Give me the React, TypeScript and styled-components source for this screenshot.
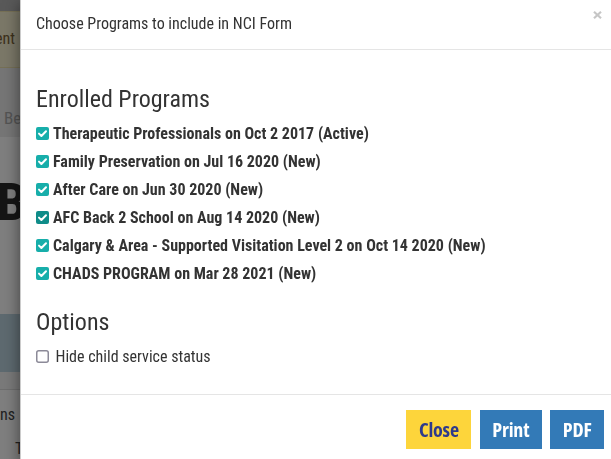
import React from "react";
import styled, { createGlobalStyle } from "styled-components";

const Global = createGlobalStyle`
  html, body { margin: 0; padding: 0; }
  body {
    width: 611px;
    height: 459px;
    overflow: hidden;
    background: #fff;
    font-family: "Roboto Condensed", Roboto, "Liberation Sans", sans-serif;
    color: #333;
  }
`;

/* ---------- underlying page (dimmed by the backdrop) ---------- */
const Page = styled.div`
  display: flex;
  flex-direction: column;
  width: 611px;
  height: 459px;
`;

const NavBar = styled.div`
  height: 11px;
  background: #b3b3b3;
`;

const Alert = styled.div`
  height: 55px;
  background: #f6f0d0;
  border-top: 1px solid #ece0ac;
  border-bottom: 1px solid #ece0ac;
  display: flex;
  align-items: center;
  color: #7a6238;
  font-size: 16px;
  line-height: 20px;
`;

const EdgeText = styled.div<{ $end: number }>`
  width: ${(p) => p.$end}px;
  display: flex;
  justify-content: flex-end;
  white-space: nowrap;
`;

const Tabs = styled.div`
  height: 69px;
  background: #ececec;
  box-sizing: border-box;
  padding: 40px 0 0 4px;
  font-size: 17px;
  line-height: 20px;
  color: #a8a8a8;
  white-space: nowrap;
`;

const Hero = styled.div`
  height: 178px;
  background: #fff;
  box-sizing: border-box;
  padding-top: 36px;
`;

const HeroTitle = styled.h1`
  margin: 0 0 0 -3px;
  font-size: 52px;
  font-weight: 700;
  line-height: 60px;
  color: #2a2a2a;
  white-space: nowrap;
`;

const TableHead = styled.div`
  height: 58px;
  background: #bdd4e0;
`;

const Band = styled.div`
  height: 17px;
  background: #f4f4f4;
  border-bottom: 1px solid #dcdcdc;
`;

const Rows = styled.div`
  flex: 1;
  background: #fff;
  display: flex;
  flex-direction: column;
  padding-top: 15px;
  gap: 14px;
  font-size: 16px;
  line-height: 20px;
  color: #444;
`;

const Trail = styled.div`
  padding-left: 15px;
  white-space: nowrap;
`;

/* ---------- modal ---------- */
const Backdrop = styled.div`
  position: fixed;
  inset: 0;
  background: rgba(0, 0, 0, 0.5);
`;

const Modal = styled.div`
  position: absolute;
  top: -2px;
  left: 20px;
  width: 600px;
  box-sizing: border-box;
  background: #fff;
  border: 1px solid rgba(0, 0, 0, 0.2);
  box-shadow: 0 5px 15px rgba(0, 0, 0, 0.5);
  color: #333;
`;

const Header = styled.div`
  display: flex;
  justify-content: space-between;
  align-items: flex-start;
  padding: 15px;
  border-bottom: 1px solid #e5e5e5;
`;

const Title = styled.h4`
  margin: 0;
  font-size: 16px;
  line-height: 20px;
  font-weight: 400;
`;

const CloseX = styled.button`
  border: 0;
  padding: 0;
  background: none;
  width: 9px;
  height: 8px;
  margin: -3px 2px 0 0;
  display: flex;
  cursor: pointer;
`;

const Body = styled.div`
  padding: 15px 15px 23px;
`;

const SectionTitle = styled.h3<{ $top: number }>`
  margin: ${(p) => p.$top}px 0 7px;
  font-size: 24px;
  line-height: 26.4px;
  font-weight: 400;
  color: #333;
`;

const Item = styled.label<{ $gap: number; $bold: boolean }>`
  display: flex;
  align-items: center;
  gap: ${(p) => p.$gap}px;
  height: 28px;
  font-size: 16px;
  font-weight: ${(p) => (p.$bold ? 700 : 400)};
  white-space: nowrap;
  cursor: pointer;
`;

const Footer = styled.div`
  display: flex;
  justify-content: flex-end;
  gap: 8.5px;
  padding: 15px;
  border-top: 1px solid #e5e5e5;
`;

const Button = styled.button<{ $variant: "yellow" | "blue" }>`
  height: 39.5px;
  padding: 0 12.5px;
  border: 0;
  border-radius: 0;
  font-family: "Open Sans", "Roboto Condensed", sans-serif;
  font-stretch: 75%;
  font-weight: 700;
  font-size: 20px;
  letter-spacing: -0.2px;
  line-height: 1;
  cursor: pointer;
  background: ${(p) => (p.$variant === "yellow" ? "#fdd53b" : "#337ab7")};
  color: ${(p) => (p.$variant === "yellow" ? "#2e3a8c" : "#ffffff")};
`;

function CheckBox({ checked, focus }: { checked: boolean; focus?: boolean }) {
  if (!checked) {
    return (
      <svg width="13" height="13" viewBox="0 0 13 13" style={{ flex: "none" }}>
        <rect x="0.75" y="0.75" width="11.5" height="11.5" rx="2" fill="#fff" stroke="#8c8a98" strokeWidth="1.5" />
      </svg>
    );
  }
  return (
    <svg width="13" height="13" viewBox="0 0 13 13" style={{ flex: "none" }}>
      <rect x="0" y="0" width="13" height="13" rx="2" fill={focus ? "#0f8c89" : "#17aeaa"} />
      <polyline points="3,6.6 5.4,9 10,4.2" fill="none" stroke="#fff" strokeWidth="2" strokeLinecap="round" strokeLinejoin="round" />
    </svg>
  );
}

const programs = [
  "Therapeutic Professionals on Oct 2 2017 (Active)",
  "Family Preservation on Jul 16 2020 (New)",
  "After Care on Jun 30 2020 (New)",
  "AFC Back 2 School on Aug 14 2020 (New)",
  "Calgary & Area - Supported Visitation Level 2 on Oct 14 2020 (New)",
  "CHADS PROGRAM on Mar 28 2021 (New)",
];

export default function App() {
  return (
    <>
      <Global />
      <Page>
        <NavBar />
        <Alert>
          <EdgeText $end={15}>Current Placement</EdgeText>
        </Alert>
        <Tabs>Benefits</Tabs>
        <Hero>
          <HeroTitle>Bailey</HeroTitle>
        </Hero>
        <TableHead />
        <Band />
        <Rows>
          <EdgeText $end={15}>Actions</EdgeText>
          <Trail>Tr</Trail>
        </Rows>
      </Page>
      <Backdrop />
      <Modal role="dialog">
        <Header>
          <Title>Choose Programs to include in NCI Form</Title>
          <CloseX aria-label="Close">
            <svg width="9" height="8" viewBox="0 0 9 8">
              <path d="M1 0.8 L8 7.2 M8 0.8 L1 7.2" stroke="#c6c6c6" strokeWidth="2.2" />
            </svg>
          </CloseX>
        </Header>
        <Body>
          <SectionTitle $top={21}>Enrolled Programs</SectionTitle>
          {programs.map((p, i) => (
            <Item key={p} $gap={4} $bold>
              <CheckBox checked focus={i === 3} />
              {p}
            </Item>
          ))}
          <SectionTitle $top={22}>Options</SectionTitle>
          <Item $gap={6.5} $bold={false}>
            <CheckBox checked={false} />
            Hide child service status
          </Item>
        </Body>
        <Footer>
          <Button $variant="yellow">Close</Button>
          <Button $variant="blue">Print</Button>
          <Button $variant="blue">PDF</Button>
        </Footer>
      </Modal>
    </>
  );
}
